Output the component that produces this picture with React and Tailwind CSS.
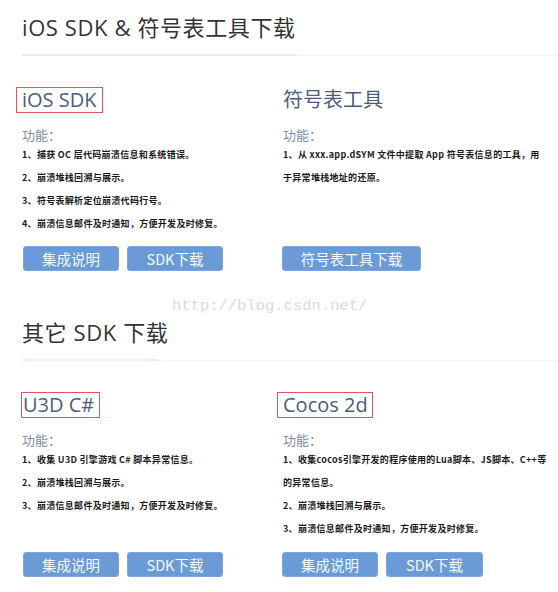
import React from "react";

const HEAD = { fontFamily: "'Open Sans','Noto Sans CJK SC',sans-serif" };
const CJK = { fontFamily: "'Noto Sans CJK SC',sans-serif" };

function Heading({ children, dark }) {
  return (
    <div>
      <h2 className="text-[22px] leading-[30px] text-[#333333] font-normal tracking-[0.6px]" style={HEAD}>
        {children}
      </h2>
      <div className="mt-[12px] flex items-start h-[2px]">
        <div className="h-[2px] bg-[#e8eef4]" style={{ width: dark }} />
        <div className="flex-1 h-[1px] mt-[1px] bg-[#f0f5f9]" />
      </div>
    </div>
  );
}

function Button({ children, w }) {
  return (
    <div
      className={`h-[25px] ${w} rounded-[3px] bg-[#6b9bd7] border border-[#7ba7de] text-[#f5f8fd] text-[14.5px] flex items-center justify-center`}
      style={CJK}
    >
      {children}
    </div>
  );
}

function Column({ title, box, lines, buttons, btnShift, btnPad }) {
  return (
    <div className="flex flex-col">
      <div
        className={`self-start h-[26px] flex items-center border text-[20px] text-[#4c5c7b] ${box}`}
        style={HEAD}
      >
        {title}
      </div>
      <div className="mt-[14px] text-[13px] leading-[16px] text-[#7d8ca8]" style={CJK}>
        功能：
      </div>
      <div className="text-[9px] leading-[23px] text-[#1a1a1a] font-semibold tracking-[0.3px]" style={CJK}>
        {lines.map((l, i) => (
          <div key={i} className="whitespace-nowrap">
            {l}
          </div>
        ))}
      </div>
      <div className={`mt-auto ${btnPad} flex gap-[8px] ${btnShift}`}>
        {buttons.map((b, i) => (
          <Button key={i} w={b.w}>
            {b.t}
          </Button>
        ))}
      </div>
    </div>
  );
}

export default function App() {
  return (
    <div className="relative w-[558px] h-[592px] bg-white overflow-hidden pl-[22px] pt-[12px]">
      <Heading dark="275px">iOS SDK &amp; 符号表工具下载</Heading>

      <div className="mt-[31px] grid grid-cols-[261px_1fr]">
        <Column
          title="iOS SDK"
          box="-ml-[6px] pl-[5px] pr-[5px] border-[#e2535b]"
          lines={[
            "1、捕获 OC 层代码崩溃信息和系统错误。",
            "2、崩溃堆栈回溯与展示。",
            "3、符号表解析定位崩溃代码行号。",
            "4、崩溃信息邮件及时通知，方便开发及时修复。",
          ]}
          buttons={[
            { t: "集成说明", w: "w-[96px]" },
            { t: "SDK下载", w: "w-[96px]" },
          ]}
          btnShift="ml-[1px]"
          btnPad="pt-[11px]"
        />
        <Column
          title="符号表工具"
          box="-ml-[6px] pl-[5px] pr-[5px] border-transparent"
          lines={[
            "1、从 xxx.app.dSYM 文件中提取 App 符号表信息的工具，用",
            "于异常堆栈地址的还原。",
          ]}
          buttons={[{ t: "符号表工具下载", w: "w-[139px]" }]}
          btnShift="-ml-[1px]"
          btnPad="pt-[11px]"
        />
      </div>

      <div className="mt-[46px]">
        <Heading dark="136px">其它 SDK 下载</Heading>
      </div>

      <div className="mt-[31px] grid grid-cols-[261px_1fr]">
        <Column
          title="U3D C#"
          box="-ml-[1px] pl-[1px] pr-[5px] border-[#e2535b]"
          lines={[
            "1、收集 U3D 引擎游戏 C# 脚本异常信息。",
            "2、崩溃堆栈回溯与展示。",
            "3、崩溃信息邮件及时通知，方便开发及时修复。",
          ]}
          buttons={[
            { t: "集成说明", w: "w-[96px]" },
            { t: "SDK下载", w: "w-[96px]" },
          ]}
          btnShift="ml-[1px]"
          btnPad="pt-[12px]"
        />
        <Column
          title="Cocos 2d"
          box="-ml-[6px] pl-[5px] pr-[4px] border-[#e2535b]"
          lines={[
            "1、收集cocos引擎开发的程序使用的Lua脚本、JS脚本、C++等",
            "的异常信息。",
            "2、崩溃堆栈回溯与展示。",
            "3、崩溃信息邮件及时通知，方便开发及时修复。",
          ]}
          buttons={[
            { t: "集成说明", w: "w-[96px]" },
            { t: "SDK下载", w: "w-[97px]" },
          ]}
          btnShift="-ml-[1px]"
          btnPad="pt-[12px]"
        />
      </div>

      <div
        className="absolute left-[172px] top-[296px] text-[15.5px] leading-[20px] text-[#dadada] pointer-events-none"
        style={{ fontFamily: "'Liberation Mono',monospace" }}
      >
        http://blog.csdn.net/
      </div>
    </div>
  );
}
